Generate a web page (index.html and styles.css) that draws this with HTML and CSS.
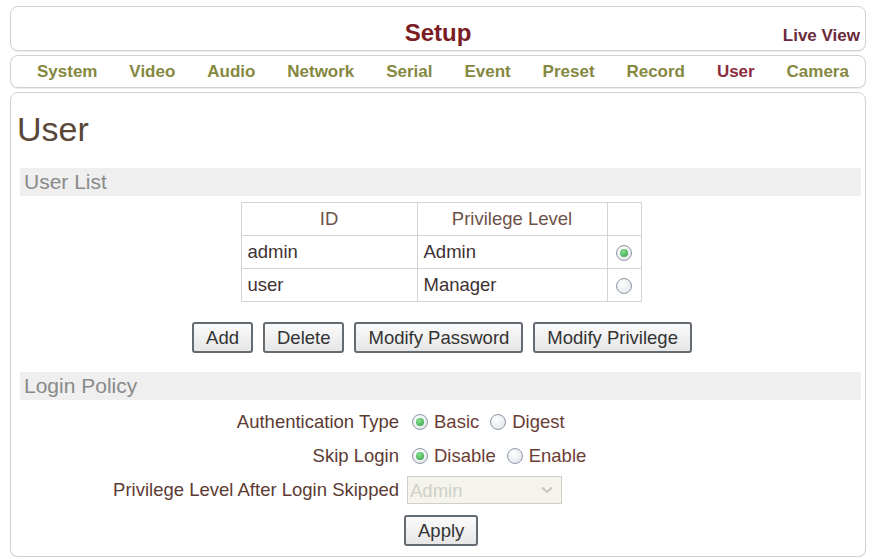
FILE: index.html
```
<!DOCTYPE html>
<html>
<head>
    <title>Setup - User</title>
    <link rel="stylesheet" href="styles.css">
</head>
<body>
    <div class="page">
        <!-- Title bar -->
        <div class="topbar">
            <span></span>
            <span class="title">Setup</span>
            <a class="live-link" href="#">Live View</a>
        </div>

        <!-- Setup menu -->
        <div class="menu">
            <a href="#">System</a>
            <a href="#">Video</a>
            <a href="#">Audio</a>
            <a href="#">Network</a>
            <a href="#">Serial</a>
            <a href="#">Event</a>
            <a href="#">Preset</a>
            <a href="#">Record</a>
            <a href="#" class="active">User</a>
            <a href="#">Camera</a>
        </div>

        <div class="content">
            <h1>User</h1>

            <!-- User list -->
            <div class="section-title">User List</div>
            <table class="user-table">
                <tr>
                    <th class="col-id">ID</th>
                    <th class="col-level">Privilege Level</th>
                    <th class="col-sel"></th>
                </tr>
                <tr>
                    <td>admin</td>
                    <td>Admin</td>
                    <td class="col-sel"><input type="radio" name="userSel" checked></td>
                </tr>
                <tr>
                    <td>user</td>
                    <td>Manager</td>
                    <td class="col-sel"><input type="radio" name="userSel"></td>
                </tr>
            </table>
            <div class="button-row">
                <button>Add</button>
                <button>Delete</button>
                <button>Modify Password</button>
                <button>Modify Privilege</button>
            </div>

            <!-- Login policy -->
            <div class="section-title">Login Policy</div>
            <div class="policy-form">
                <div class="label">Authentication Type</div>
                <div class="field">
                    <input type="radio" name="authType" id="authBasic" checked>
                    <label for="authBasic" class="opt wide">Basic</label>
                    <input type="radio" name="authType" id="authDigest">
                    <label for="authDigest" class="opt wide">Digest</label>
                </div>

                <div class="label">Skip Login</div>
                <div class="field">
                    <input type="radio" name="skipLogin" id="skipOff" checked>
                    <label for="skipOff" class="opt">Disable</label>
                    <input type="radio" name="skipLogin" id="skipOn">
                    <label for="skipOn" class="opt">Enable</label>
                </div>

                <div class="label">Privilege Level After Login Skipped</div>
                <div class="field">
                    <span class="select">
                        <select disabled>
                            <option>Admin</option>
                            <option>Manager</option>
                            <option>Viewer</option>
                        </select>
                        <svg width="12" height="8" viewBox="0 0 12 8"><path d="M1 1.5 L6 6 L11 1.5" fill="none" stroke="#c4c4bc" stroke-width="2"/></svg>
                    </span>
                </div>

                <div></div>
                <div class="field apply-cell">
                    <button>Apply</button>
                </div>
            </div>
        </div>
    </div>
</body>
</html>
```

FILE: styles.css
```
body { margin: 0; background: #fff; font-family: "Liberation Sans", Arial, sans-serif; color: #5a3a33; }
.page { padding: 6px 10px 0; }

.topbar, .menu, .content { border: 1px solid #d2d2d2; border-radius: 8px; box-shadow: 0 1px 1px rgba(0,0,0,0.08); background: #fff; }

.topbar { height: 43px; display: grid; grid-template-columns: 1fr auto 1fr; align-items: center; padding: 0 5px; }
.title { font-size: 24px; font-weight: bold; color: #7a1d22; padding-top: 8px; }
.live-link { justify-self: end; align-self: end; padding-bottom: 4px; font-size: 17px; font-weight: bold; color: #6b2a3a; text-decoration: none; }

.menu { margin-top: 4px; height: 31px; display: flex; justify-content: space-between; align-items: center; padding: 0 16px 0 26px; }
.menu a { font-size: 17px; font-weight: bold; color: #85883f; text-decoration: none; }
.menu a.active { color: #8c2b3c; }

.content { margin-top: 4px; height: 465px; box-sizing: border-box; padding: 17px 4px 0 6px; }
h1 { margin: 0; font-size: 34px; font-weight: normal; line-height: 38px; color: #5a4738; }

.section-title { margin: 20px 0 0 3px; height: 28px; line-height: 28px; padding-left: 4px; background: #efefef; color: #8a8a8a; font-size: 21px; }
.button-row + .section-title { margin-top: 19px; }

.user-table { margin: 6px auto 0; border-collapse: collapse; font-size: 18.5px; color: #3e3232; position: relative; left: 2px; }
.user-table th, .user-table td { border: 1px solid #d3d3d3; height: 32px; padding: 0 6px; text-align: left; }
.user-table th { font-weight: normal; text-align: center; color: #6e5249; }
.col-id { width: 163px; }
.col-level { width: 177px; }
.user-table .col-sel { width: 21px; text-align: center; }

.button-row { display: flex; justify-content: center; gap: 10px; margin-top: 20px; position: relative; left: 3px; }
button { font-family: inherit; font-size: 18.5px; color: #333; height: 31px; padding: 0 12px; border: 2px solid #646b72; border-radius: 3px; background: linear-gradient(#fbfbfb, #e6e6e6); cursor: pointer; }

input[type=radio] { appearance: none; box-sizing: border-box; width: 16px; height: 16px; margin: 0; border: 1px solid #8e98a4; border-radius: 50%; background: radial-gradient(circle at 40% 35%, #ffffff, #dbe1e8); display: inline-grid; place-content: center; vertical-align: middle; }
input[type=radio]:checked::before { content: ""; width: 8px; height: 8px; border-radius: 50%; background: radial-gradient(circle at 40% 35%, #86e090, #2e9c41); }

.section-title + .policy-form { margin-top: 4px; }
.policy-form { display: grid; grid-template-columns: 382px 1fr; grid-template-rows: 35px 34px 34px auto; column-gap: 5px; font-size: 18.5px; }
.label { text-align: right; align-self: center; color: #5b3b33; }
.field { display: flex; align-items: center; }
.field input[type=radio] { margin-left: 8px; }
.field input[type=radio] + .opt { margin-left: 6px; }
.field .opt.wide { margin-left: 12px; }
.field input[type=radio] + .opt + input[type=radio] { margin-left: 11px; }
.opt { color: #6a3d35; }

.select { display: inline-flex; align-items: center; margin-left: 3px; width: 155px; height: 28px; box-sizing: border-box; border: 1px solid #d0d0c6; background: #f4f4ec; }
.select select { appearance: none; flex: 1; border: none; background: transparent; font-family: inherit; font-size: 18.5px; color: #c2c2b8; padding: 0 2px; }
.select svg { margin: 0 8px 0 4px; }

.apply-cell button { margin-top: 8px; }
```
